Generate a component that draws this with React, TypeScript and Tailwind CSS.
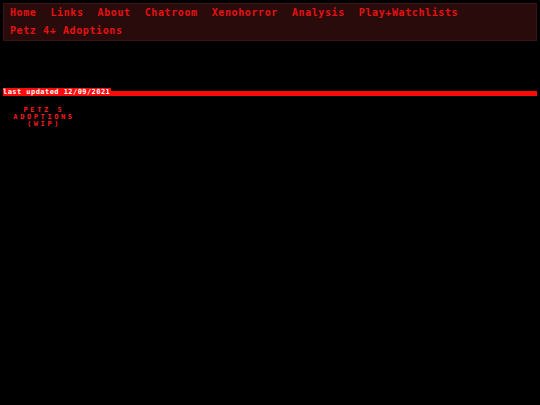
const navItems = ['Home', 'Links', 'About', 'Chatroom', 'Xenohorror', 'Analysis', 'Play+Watchlists', 'Petz 4+ Adoptions'];

export default function App() {
  return (
    <div className="min-h-[405px] w-[540px] bg-black font-['DejaVu_Sans_Mono',monospace]">
      <div className="pt-[3px] px-[3px]">
        <nav className="flex flex-wrap gap-x-[14px] border border-[#3a1414] bg-[#2a0b0b] pl-[6px] pr-2 text-[10px] font-bold leading-[18px] tracking-[0.6px] text-[#e31212]">
          {navItems.map((item) => (
            <a key={item} className="cursor-pointer whitespace-nowrap">
              {item}
            </a>
          ))}
        </nav>
      </div>

      <div className="mt-[50px] px-[3px]">
        <div className="relative h-[5px] bg-[#ff0a0a]">
          <span className="absolute left-0 top-[-3px] bg-[#ff0a0a] pr-[1px] text-[7px] font-bold leading-[8px] tracking-[0.45px] text-white">
            last updated 12/09/2021
          </span>
        </div>
      </div>

      <div className="mt-[11px] ml-[3px] w-[82px] text-center text-[7px] font-bold leading-[7px] tracking-[2.6px] text-[#ff1a1a]">
        <div>PETZ 5</div>
        <div>ADOPTIONS</div>
        <div>(WIP)</div>
      </div>
    </div>
  );
}
